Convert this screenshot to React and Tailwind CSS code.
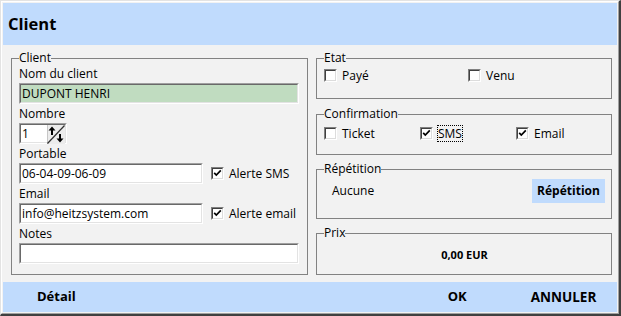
import React from "react";

function Sunken({ className = "", bg = "bg-white", children }) {
  return (
    <div className={`border border-t-[#a0a0a0] border-l-[#a0a0a0] border-r-white border-b-white ${className}`}>
      <div className={`h-full w-full border border-t-[#696969] border-l-[#696969] border-r-[#e3e3e3] border-b-[#e3e3e3] ${bg} flex items-center pl-[1px] text-[12px] whitespace-nowrap overflow-hidden`}>
        {children}
      </div>
    </div>
  );
}

function Check({ checked }) {
  return (
    <span className="shrink-0 w-[13px] h-[13px] border border-t-[#808080] border-l-[#808080] border-r-white border-b-white">
      <span className="flex w-full h-full items-center justify-center bg-white border border-t-[#404040] border-l-[#404040] border-r-[#dcdcdc] border-b-[#dcdcdc]">
        {checked && (
          <svg width="9" height="9" viewBox="0 0 9 9">
            <polyline points="1.2,3.8 3.3,6 7.8,1.4" fill="none" stroke="#000" strokeWidth="1.7" />
          </svg>
        )}
      </span>
    </span>
  );
}

function Group({ title, className = "", children }) {
  return (
    <fieldset className={`border border-[#828282] pl-[7px] pr-[6px] ${className}`}>
      <legend className="text-[12px] leading-[12px]">{title}</legend>
      {children}
    </fieldset>
  );
}

function Label({ children }) {
  return <div className="h-[19px] leading-[19px] text-[12px]">{children}</div>;
}

export default function App() {
  return (
    <div className="w-[621px] h-[316px] bg-[#f2f2f2] border-l border-t border-r-2 border-b-2 border-l-[#e3e3e3] border-t-[#e3e3e3] border-r-[#404040] border-b-[#404040] font-['Open_Sans','Noto_Sans',sans-serif] text-black">
      <div className="h-full flex flex-col border border-l-white border-t-white border-r-[#a0a0a0] border-b-[#a0a0a0] p-[1px]">
        <div className="h-[42px] shrink-0 bg-[#c0dbfd] flex items-center pl-[5px] text-[16.5px] font-bold">
          Client
        </div>
        <div className="h-[237px] shrink-0 flex gap-[8px] pl-[8px] pt-[7px]">
          <Group title="Client" className="w-[297px] h-[223px]">
            <Label>Nom du client</Label>
            <Sunken className="w-[280px] h-[21px]" bg="bg-[#c0dcc0]">DUPONT HENRI</Sunken>
            <Label>Nombre</Label>
            <div className="w-[48px] h-[21px] border border-t-[#a0a0a0] border-l-[#a0a0a0] border-r-white border-b-white">
              <div className="h-full flex border border-t-[#696969] border-l-[#696969] border-r-[#e3e3e3] border-b-[#e3e3e3] bg-white">
                <div className="flex-1 pl-[1px] text-[12px] flex items-center">1</div>
                <svg width="18" height="19" viewBox="0 0 18 19" className="shrink-0">
                  <rect x="0" y="0" width="18" height="19" fill="#ececec" />
                  <line x1="0" y1="0" x2="0" y2="19" stroke="#a0a0a0" />
                  <line x1="0.5" y1="18.5" x2="17.5" y2="0.5" stroke="#303030" strokeWidth="1.2" />
                  <polygon points="5,1.5 1.5,5.5 8.5,5.5" fill="#000" />
                  <rect x="4" y="5" width="2" height="5" fill="#000" />
                  <polygon points="13,17.5 9.5,13.5 16.5,13.5" fill="#000" />
                  <rect x="12" y="9" width="2" height="5" fill="#000" />
                </svg>
              </div>
            </div>
            <Label>Portable</Label>
            <div className="flex items-center">
              <Sunken className="w-[184px] h-[21px]">06-04-09-06-09</Sunken>
              <span className="ml-[8px] flex"><Check checked /></span>
              <span className="ml-[5px] text-[12px]">Alerte SMS</span>
            </div>
            <Label>Email</Label>
            <div className="flex items-center">
              <Sunken className="w-[184px] h-[21px]">info@heitzsystem.com</Sunken>
              <span className="ml-[8px] flex"><Check checked /></span>
              <span className="ml-[5px] text-[12px]">Alerte email</span>
            </div>
            <Label>Notes</Label>
            <Sunken className="w-[280px] h-[21px]"></Sunken>
          </Group>

          <div className="w-[296px] flex flex-col">
            <Group title="Etat" className="h-[47px]">
              <div className="flex mt-[5px] text-[12px] leading-[13px]">
                <div className="w-[144px] flex items-center"><Check /><span className="ml-[5px]">Payé</span></div>
                <div className="flex items-center"><Check /><span className="ml-[5px]">Venu</span></div>
              </div>
            </Group>
            <Group title="Confirmation" className="h-[47px] mt-[9px]">
              <div className="flex mt-[5px] text-[12px] leading-[13px]">
                <div className="w-[96px] flex items-center"><Check /><span className="ml-[5px]">Ticket</span></div>
                <div className="w-[96px] flex items-center">
                  <Check checked />
                  <span className="ml-[4px] border border-dotted border-black px-[0px] h-[17px] leading-[15px]">SMS</span>
                </div>
                <div className="flex items-center"><Check checked /><span className="ml-[5px]">Email</span></div>
              </div>
            </Group>
            <Group title="Répétition" className="h-[56px] mt-[8px]">
              <div className="flex items-center mt-[4px]">
                <span className="ml-[8px] text-[12px] leading-[16px]">Aucune</span>
                <div className="ml-auto w-[73px] h-[24px] bg-[#c0dbfd] flex items-center justify-center text-[12px] font-bold">
                  Répétition
                </div>
              </div>
            </Group>
            <Group title="Prix" className="h-[48px] mt-[8px]">
              <div className="mt-[8px] text-center text-[11px] leading-[16px] font-bold">0,00 EUR</div>
            </Group>
          </div>
        </div>
        <div className="h-[30px] shrink-0 bg-[#c0dbfd] flex items-center text-[13px] font-bold">
          <span className="ml-[34px]">Détail</span>
          <span className="ml-[372px]">OK</span>
          <span className="ml-[64px] text-[13.5px]">ANNULER</span>
        </div>
      </div>
    </div>
  );
}
